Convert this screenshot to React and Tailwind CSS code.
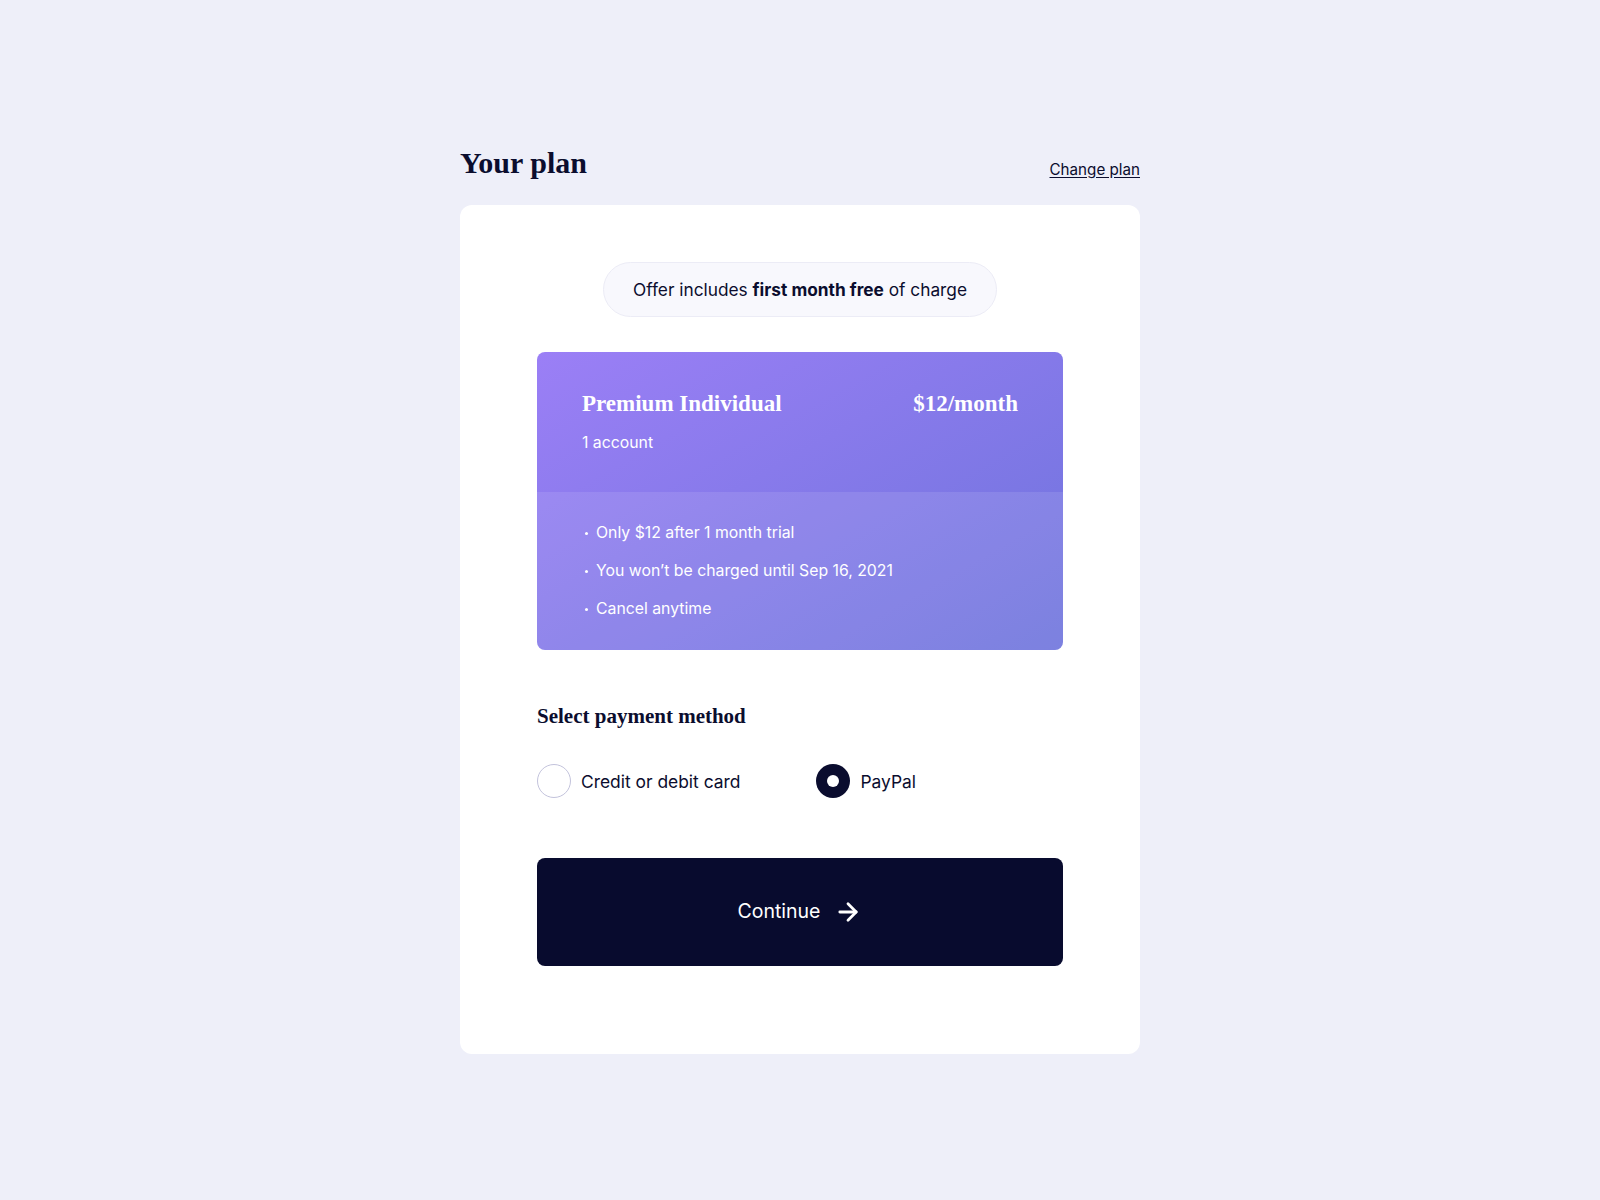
import { useState } from 'react';
import { ArrowRight } from 'lucide-react';

const sans = { fontFamily: 'Inter, Roboto, "Noto Sans", sans-serif' };
const serif = { fontFamily: '"Liberation Serif", "DejaVu Serif", serif' };

const perks = [
  'Only $12 after 1 month trial',
  'You won’t be charged until Sep 16, 2021',
  'Cancel anytime',
];

const Radio = ({ checked, label, onClick }) => (
  <button type="button" onClick={onClick} className="flex items-center gap-[10px]">
    {checked ? (
      <span className="w-[34px] h-[34px] rounded-full bg-[#0a0c2e] flex items-center justify-center">
        <span className="w-[12px] h-[12px] rounded-full bg-white" />
      </span>
    ) : (
      <span className="w-[34px] h-[34px] rounded-full border border-[#c3c3dc] bg-white" />
    )}
    <span className="text-[17.4px] leading-[27px] text-[#0b0d2e]">{label}</span>
  </button>
);

export default function App() {
  const [method, setMethod] = useState('paypal');

  return (
    <div className="min-h-screen bg-[#eeeff9] text-[#0b0d2e]" style={sans}>
      <div className="w-[680px] mx-auto pt-[145px] pb-[147px]">
        {/* Header */}
        <div className="flex items-end justify-between mb-6">
          <h1 className="text-[30px] leading-[36px] font-bold" style={serif}>Your plan</h1>
          <a href="#" className="text-[15.2px] leading-[22px] underline underline-offset-2">Change plan</a>
        </div>

        {/* Card */}
        <div className="bg-white rounded-xl px-[77px] pt-[57px] pb-[88px]">
          <div className="flex justify-center">
            <div className="rounded-full bg-[#f8f8fd] border border-[#ececf6] px-[29px] py-[13px] text-[17.3px] leading-[27px]">
              Offer includes <span className="font-bold">first month free</span> of charge
            </div>
          </div>

          {/* Plan */}
          <div className="mt-[35px] rounded-lg overflow-hidden bg-gradient-to-br from-[#9b7ff6] to-[#6d73dc] text-white">
            <div className="px-[45px] pt-[37px] pb-[37px]">
              <div className="flex items-center justify-between">
                <h2 className="text-[23px] leading-[30px] font-bold" style={serif}>Premium Individual</h2>
                <span className="text-[23px] leading-[30px] font-bold" style={serif}>$12/month</span>
              </div>
              <p className="mt-[12px] text-[15.8px] leading-[24px]">1 account</p>
            </div>
            <ul className="bg-white/10 px-[48px] pt-[29px] pb-[29px] flex flex-col gap-[14px]">
              {perks.map(p => (
                <li key={p} className="flex items-center text-[15.8px] leading-[24px]">
                  <span className="w-[3px] h-[3px] rounded-full bg-white mr-[8px]" />
                  {p}
                </li>
              ))}
            </ul>
          </div>

          {/* Payment */}
          <h3 className="mt-[52px] text-[21px] leading-[28px] font-bold" style={serif}>Select payment method</h3>
          <div className="mt-[34px] flex items-center gap-[76px]">
            <Radio checked={method === 'card'} label="Credit or debit card" onClick={() => setMethod('card')} />
            <Radio checked={method === 'paypal'} label="PayPal" onClick={() => setMethod('paypal')} />
          </div>

          <button type="button" className="mt-[60px] w-full h-[108px] rounded-lg bg-[#080b2e] text-white flex items-center justify-center gap-[14px] text-[19.5px]">
            Continue
            <ArrowRight className="w-[28px] h-[28px]" strokeWidth={2.4} />
          </button>
        </div>
      </div>
    </div>
  );
}
